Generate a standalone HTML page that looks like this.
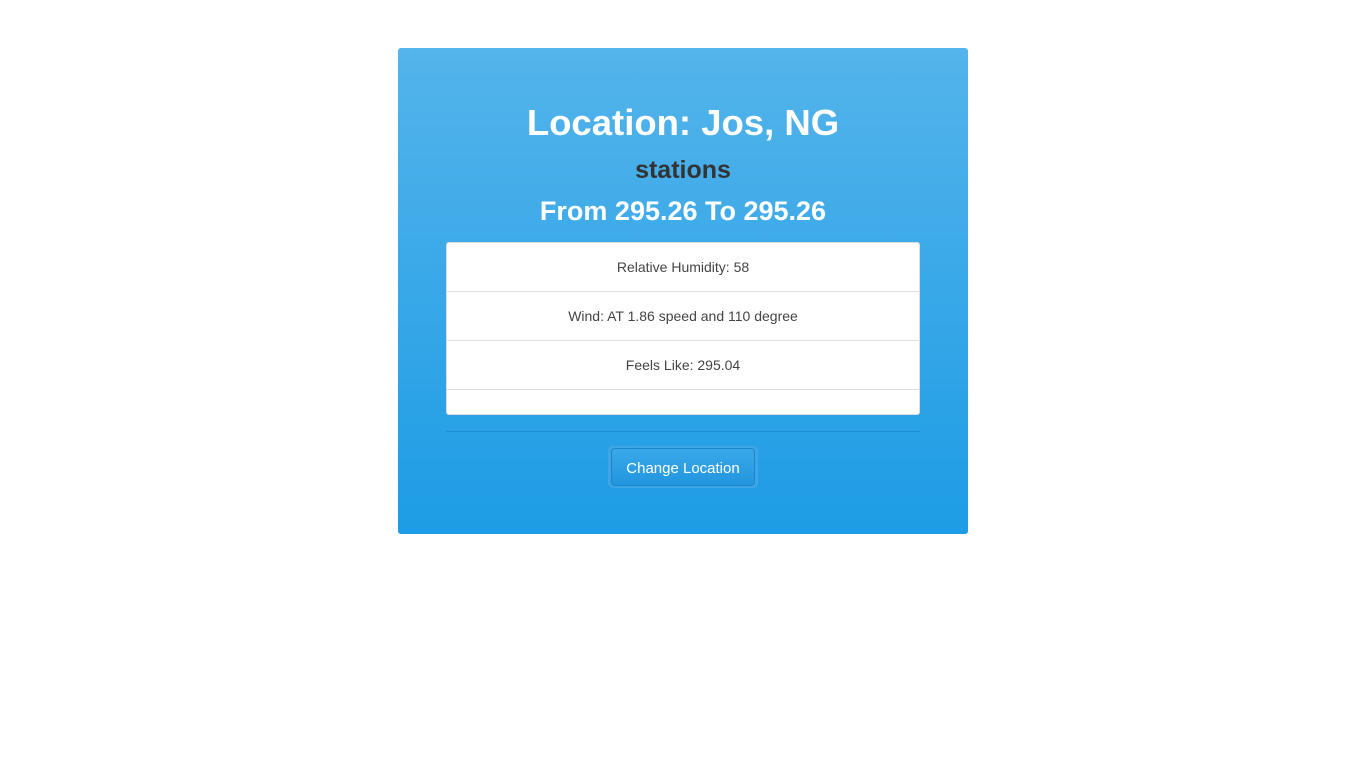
<!DOCTYPE html>
<html><head><style>
body{margin:0;background:#fff;font-family:"Liberation Sans",sans-serif;}
.card{position:absolute;left:398px;top:48px;width:570px;height:486px;border-radius:3px;background:linear-gradient(#54b4eb,#1d9ce5);}
.t{position:absolute;left:0;width:570px;text-align:center;font-weight:bold;}
.list{position:absolute;left:48px;top:194px;width:474px;height:173px;background:#fff;border:1px solid #ddd;border-radius:3px;box-sizing:border-box;}
.item{height:48px;line-height:48px;border-bottom:1px solid #ddd;text-align:center;font-size:14px;color:#444;}
.hr{position:absolute;left:48px;top:383px;width:474px;height:1px;background:#1e8ed4;}
.btn{position:absolute;left:210px;top:398px;width:150px;height:42px;border-radius:5px;background:rgba(80,170,230,0.6);}
.btn div{position:absolute;left:3px;top:2px;width:142px;height:36px;border:1px solid #1a85c8;border-radius:4px;background:linear-gradient(#3aa8ea,#2296de);color:#fff;font-size:15px;line-height:40px;text-align:center;}
</style></head><body>
<div class="card">
<div class="t" style="top:52px;font-size:36.5px;color:#fff;line-height:46px">Location: Jos, NG</div>
<div class="t" style="top:106px;font-size:25px;color:#333;line-height:32px">stations</div>
<div class="t" style="top:146px;font-size:27px;color:#fff;line-height:34px">From 295.26 To 295.26</div>
<div class="list">
<div class="item">Relative Humidity: 58</div>
<div class="item">Wind: AT 1.86 speed and 110 degree</div>
<div class="item">Feels Like: 295.04</div>
</div>
<div class="hr"></div>
<div class="btn"><div>Change Location</div></div>
</div>
</body></html>
